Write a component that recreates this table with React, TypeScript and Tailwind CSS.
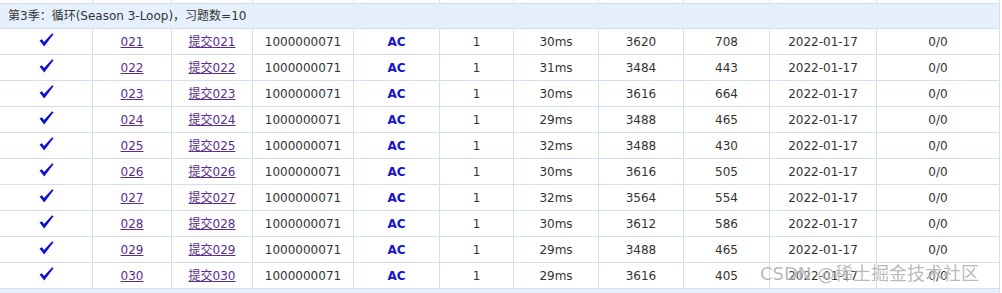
const rows = [
  ["021", "30ms", "3620", "708"],
  ["022", "31ms", "3484", "443"],
  ["023", "30ms", "3616", "664"],
  ["024", "29ms", "3488", "465"],
  ["025", "32ms", "3488", "430"],
  ["026", "30ms", "3616", "505"],
  ["027", "32ms", "3564", "554"],
  ["028", "30ms", "3612", "586"],
  ["029", "29ms", "3488", "465"],
  ["030", "29ms", "3616", "405"],
];

const cols = "grid grid-cols-[93px_79px_81px_101px_86px_74px_85px_85px_86px_107px_123px] w-[1000px]";
const cell = "flex items-center justify-center border-r border-[#d3deee]";

function Check() {
  return (
    <svg width="15" height="14" viewBox="0 0 15 14" className="-mt-1">
      <path d="M0.5 7.5 L3 6.2 L5 9 L13.2 0.3 L14.5 1.2 L5.2 13.5 Z" fill="#1010d0" />
    </svg>
  );
}

function Row({ r }: { r: string[] }) {
  const [id, time, mem, len] = r;
  return (
    <div className={`${cols} h-[26px] border-b border-[#d3deee] bg-white`}>
      <div className={cell}>
        <Check />
      </div>
      <div className={cell}>
        <a className="underline text-[#5a2d8c] cursor-pointer">{id}</a>
      </div>
      <div className={cell}>
        <a className="underline text-[#5a2d8c] cursor-pointer">提交{id}</a>
      </div>
      <div className={cell}>1000000071</div>
      <div className={`${cell} font-bold text-[#1414c8]`}>AC</div>
      <div className={cell}>1</div>
      <div className={cell}>{time}</div>
      <div className={cell}>{mem}</div>
      <div className={cell}>{len}</div>
      <div className={cell}>2022-01-17</div>
      <div className={cell}>0/0</div>
    </div>
  );
}

export default function App() {
  return (
    <div className="relative w-[1002px] h-[293px] overflow-hidden bg-white text-[12px] text-[#333] font-['DejaVu_Sans','Noto_Sans_CJK_SC',sans-serif]">
      <div className={`${cols} h-[3px]`}>
        {Array.from({ length: 11 }).map((_, i) => (
          <div key={i} className="border-r border-[#d3deee]"></div>
        ))}
      </div>
      <div className="w-[1000px] h-[26px] border-y border-r border-[#d3deee] bg-[#e6f0fc] flex items-center pl-[8px]">
        第3季：循环(Season 3-Loop)，习题数=10
      </div>
      {rows.map((r) => (
        <Row key={r[0]} r={r} />
      ))}
      <div className="w-[1000px] h-[6px] bg-[#e6f0fc] border-r border-[#d3deee]"></div>
      <span className="absolute left-[760px] top-[263px] text-[18px] leading-[22px] text-[#8a8a8a]/60 [text-shadow:0_0_2px_#fff] whitespace-nowrap">
        CSDN @稀土掘金技术社区
      </span>
    </div>
  );
}
